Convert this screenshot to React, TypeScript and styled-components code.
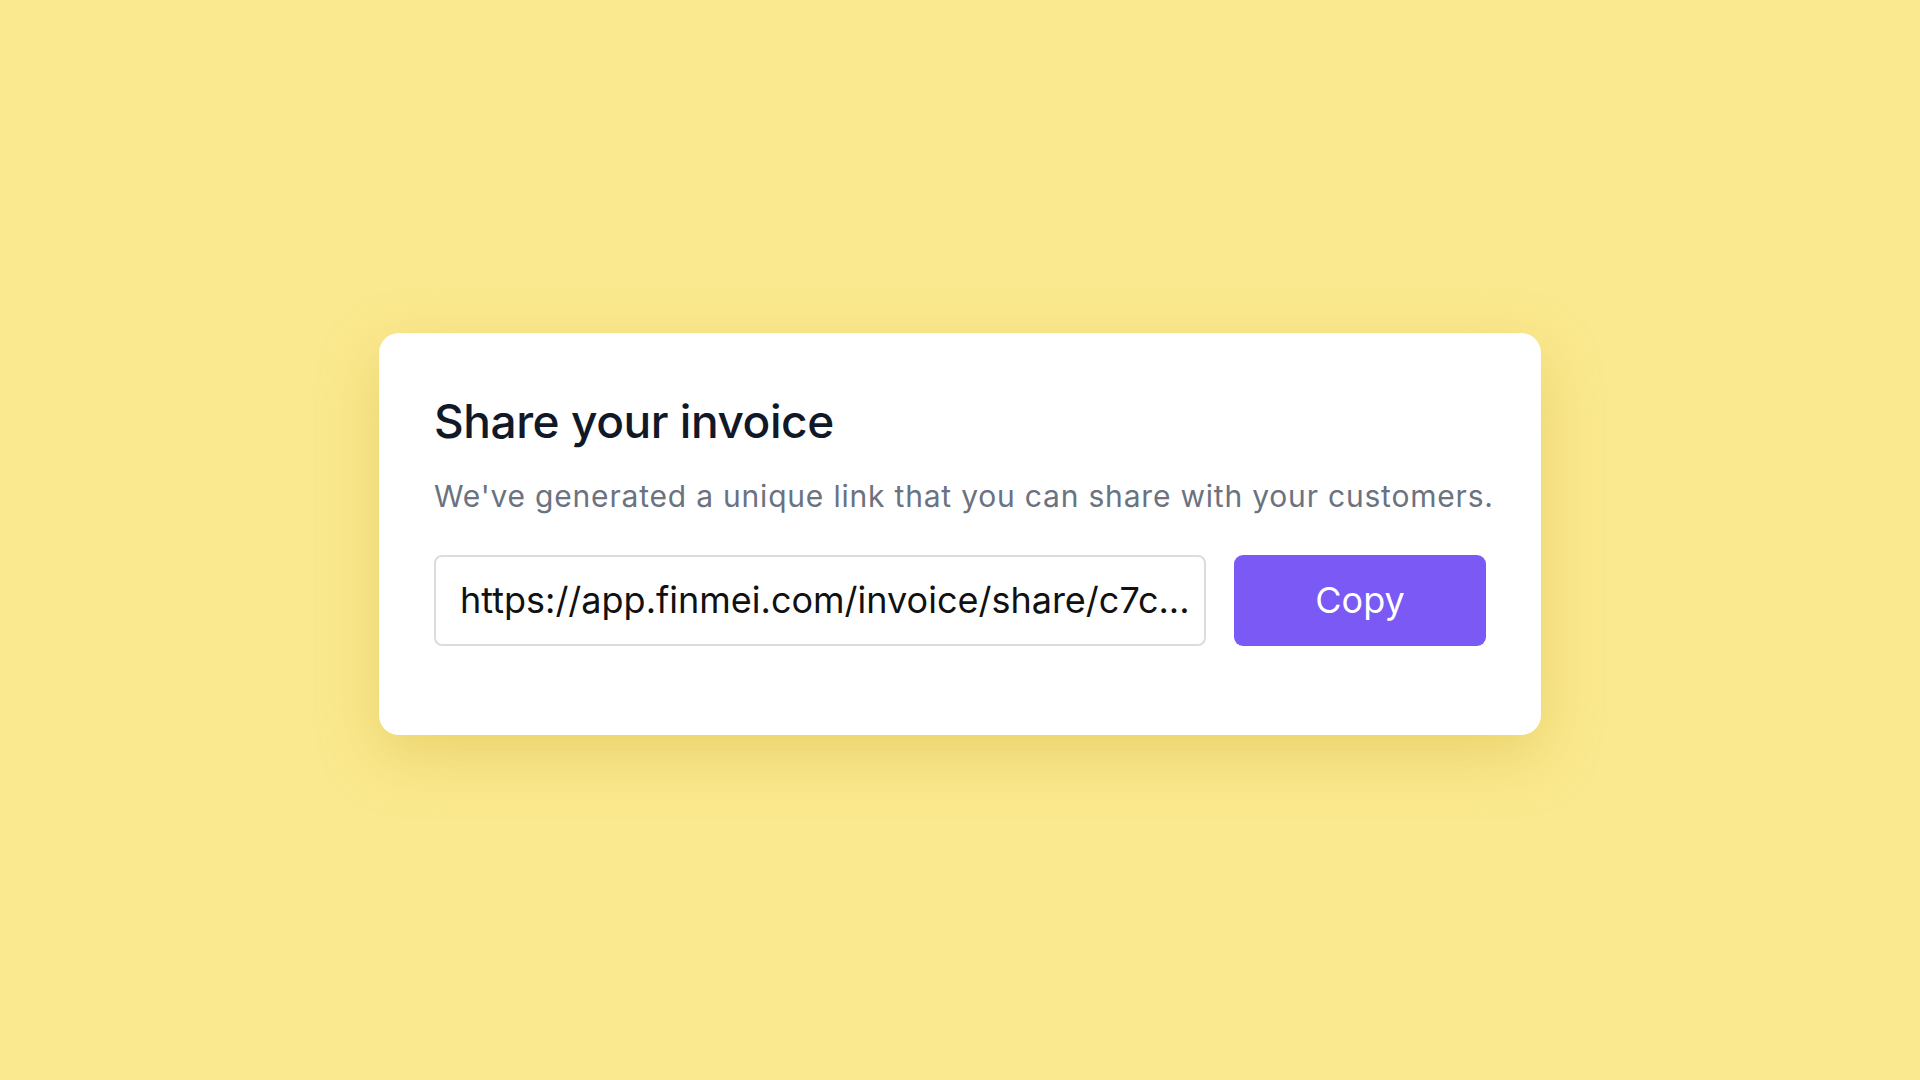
import styled, { createGlobalStyle } from "styled-components";

const GlobalStyle = createGlobalStyle`
  html, body {
    margin: 0;
    padding: 0;
    background: #fbe98f;
  }

  body {
    font-family: Inter, "Noto Sans", "Liberation Sans", sans-serif;
  }
`;

const Page = styled.div`
  width: 100%;
  height: 1080px;
  display: flex;
  justify-content: center;
  align-items: center;
  padding-bottom: 13px;
  box-sizing: border-box;
  background: #fbe98f;
`;

const Card = styled.div`
  width: 1162px;
  height: 402px;
  box-sizing: border-box;
  padding: 60px 55px 0 55px;
  background: #ffffff;
  border-radius: 20px;
  box-shadow: 0 20px 60px rgba(200, 170, 40, 0.35);
  display: flex;
  flex-direction: column;
`;

const Title = styled.h2`
  margin: 0;
  font-size: 46px;
  line-height: 56px;
  font-weight: 500;
  color: #111827;
  letter-spacing: -0.45px;
`;

const Subtitle = styled.p`
  margin: 27px 0 0 0;
  font-size: 30px;
  line-height: 40px;
  font-weight: 400;
  color: #6b7280;
  letter-spacing: 0.8px;
  white-space: nowrap;
`;

const Row = styled.div`
  margin-top: 39px;
  display: flex;
  align-items: flex-start;
  gap: 28px;
`;

const LinkField = styled.div`
  width: 772px;
  height: 91px;
  box-sizing: border-box;
  border: 2px solid #dcdcde;
  border-radius: 8px;
  padding: 0 24px;
  display: flex;
  align-items: center;
  font-size: 36px;
  color: #111111;
  white-space: nowrap;
  overflow: hidden;
`;

const CopyButton = styled.button`
  width: 252px;
  height: 91px;
  border: none;
  border-radius: 9px;
  background: #7a59f5;
  color: #ffffff;
  font-family: inherit;
  font-size: 36px;
  font-weight: 400;
  cursor: pointer;
`;

export default function App() {
  return (
    <>
      <GlobalStyle />
      <Page>
        <Card>
          <Title>Share your invoice</Title>
          <Subtitle>
            We've generated a unique link that you can share with your customers.
          </Subtitle>
          <Row>
            <LinkField>https://app.finmei.com/invoice/share/c7c...</LinkField>
            <CopyButton>Copy</CopyButton>
          </Row>
        </Card>
      </Page>
    </>
  );
}
